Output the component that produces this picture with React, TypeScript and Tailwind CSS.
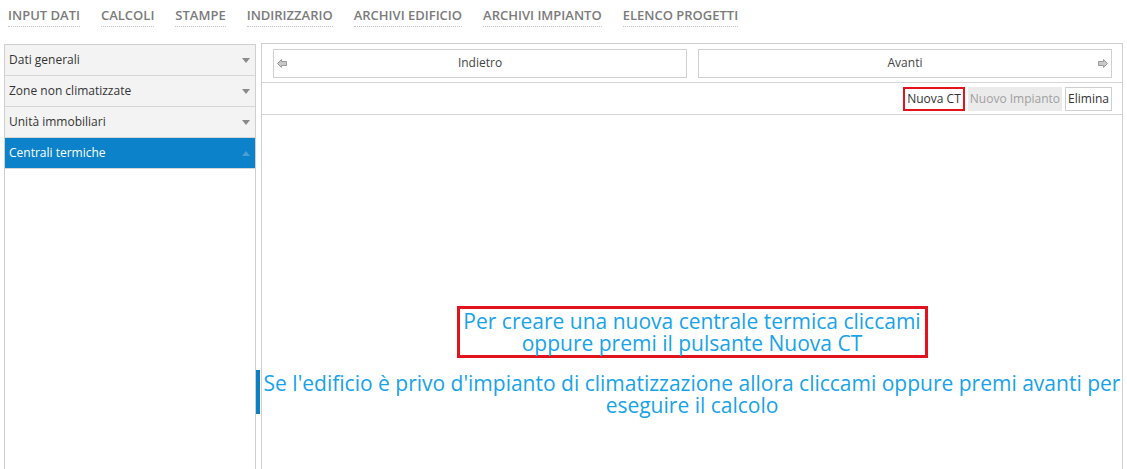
import { useState } from 'react';

const menu = ['INPUT DATI', 'CALCOLI', 'STAMPE', 'INDIRIZZARIO', 'ARCHIVI EDIFICIO', 'ARCHIVI IMPIANTO', 'ELENCO PROGETTI'];

const sections = ['Dati generali', 'Zone non climatizzate', 'Unità immobiliari', 'Centrali termiche'];

function Caret({ up, color }: { up?: boolean; color: string }) {
  return (
    <svg width="8" height="5" viewBox="0 0 8 5" className="shrink-0">
      <path d={up ? 'M0 5 L4 0 L8 5 Z' : 'M0 0 L8 0 L4 5 Z'} fill={color} />
    </svg>
  );
}

function Arrow({ dir }: { dir: 'left' | 'right' }) {
  return (
    <svg width="10" height="9" viewBox="0 0 10 9" className={dir === 'right' ? 'rotate-180' : ''}>
      <path d="M0.5 4.5 L4.5 0.5 L4.5 2.5 L9.5 2.5 L9.5 6.5 L4.5 6.5 L4.5 8.5 Z" fill="#c8c8c8" stroke="#9a9a9a" strokeWidth="1" />
    </svg>
  );
}

export default function App() {
  const [active] = useState(3);

  return (
    <div className="w-[1127px] h-[469px] bg-white overflow-hidden font-['Open_Sans',sans-serif] text-[#333]">
      <nav className="h-[43px] flex items-start gap-[21px] pl-[8px] pt-[6px]">
        {menu.map((m) => (
          <span
            key={m}
            className="text-[13px] leading-[18px] font-semibold text-[#7b7b7b] border-b border-dotted border-[#c4c4c4] pb-[2px]"
          >
            {m}
          </span>
        ))}
      </nav>

      <div className="flex h-[426px]">
        <aside className="ml-[4px] mt-[1px] w-[252px] border-l border-r border-t border-[#cfcfcf] bg-white">
          {sections.map((s, i) => (
            <div
              key={s}
              className={`h-[31px] flex items-center justify-between pl-[4px] pr-[5px] border-b border-[#d6d6d6] text-[12px] ${
                i === active ? 'bg-[#0b82c9] text-white' : 'bg-[#f3f3f3] text-[#333]'
              }`}
            >
              <span>{s}</span>
              <Caret up={i === active} color={i === active ? '#4d9fd3' : '#8a8a8a'} />
            </div>
          ))}
        </aside>

        <div className="w-[5px] flex flex-col">
          <div className="mt-[327px] h-[44px] w-[4px] bg-[#0b7fc4]" />
        </div>

        <main className="flex-1 mr-[4px] border-l border-r border-t border-[#cfcfcf] flex flex-col">
          <div className="h-[39px] flex items-center gap-[11px] pl-[11px] pr-[10px] border-b border-[#d6d6d6]">
            <button className="flex-1 h-[29px] border border-[#d0d0d0] bg-white flex items-center px-[3px] text-[12px] text-[#444]">
              <Arrow dir="left" />
              <span className="flex-1 text-center pr-[10px]">Indietro</span>
            </button>
            <button className="flex-1 h-[29px] border border-[#d0d0d0] bg-white flex items-center px-[3px] text-[12px] text-[#444]">
              <span className="flex-1 text-center pl-[10px]">Avanti</span>
              <Arrow dir="right" />
            </button>
          </div>

          <div className="h-[32px] flex items-center justify-end gap-[3px] pr-[10px] border-b border-[#d6d6d6] text-[12px]">
            <button className="h-[24px] px-[2px] border-2 border-[#e3131e] bg-white text-[#333]">Nuova CT</button>
            <button className="h-[24px] px-[2px] bg-[#ebebeb] text-[#a0a0a0]">Nuovo Impianto</button>
            <button className="h-[24px] px-[2px] border border-[#cfcfcf] bg-white text-[#333]">Elimina</button>
          </div>

          <div className="flex-1 flex flex-col items-center pt-[191px] text-[#17a3e9] text-[21px] leading-[22px] text-center">
            <div className="border-[3px] border-[#e3131e] pt-[1px] pb-[1px] w-[471px] whitespace-nowrap">
              <p>Per creare una nuova centrale termica cliccami</p>
              <p>oppure premi il pulsante Nuova CT</p>
            </div>
            <div className="mt-[14px] whitespace-nowrap">
              <p>Se l'edificio è privo d'impianto di climatizzazione allora cliccami oppure premi avanti per</p>
              <p>eseguire il calcolo</p>
            </div>
          </div>
        </main>
      </div>
    </div>
  );
}
